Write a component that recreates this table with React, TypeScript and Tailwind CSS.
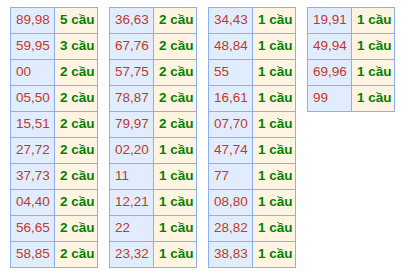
import React from "react";

const tables: [string, string][][] = [
  [
    ["89,98", "5 cầu"],
    ["59,95", "3 cầu"],
    ["00", "2 cầu"],
    ["05,50", "2 cầu"],
    ["15,51", "2 cầu"],
    ["27,72", "2 cầu"],
    ["37,73", "2 cầu"],
    ["04,40", "2 cầu"],
    ["56,65", "2 cầu"],
    ["58,85", "2 cầu"],
  ],
  [
    ["36,63", "2 cầu"],
    ["67,76", "2 cầu"],
    ["57,75", "2 cầu"],
    ["78,87", "2 cầu"],
    ["79,97", "2 cầu"],
    ["02,20", "1 cầu"],
    ["11", "1 cầu"],
    ["12,21", "1 cầu"],
    ["22", "1 cầu"],
    ["23,32", "1 cầu"],
  ],
  [
    ["34,43", "1 cầu"],
    ["48,84", "1 cầu"],
    ["55", "1 cầu"],
    ["16,61", "1 cầu"],
    ["07,70", "1 cầu"],
    ["47,74", "1 cầu"],
    ["77", "1 cầu"],
    ["08,80", "1 cầu"],
    ["28,82", "1 cầu"],
    ["38,83", "1 cầu"],
  ],
  [
    ["19,91", "1 cầu"],
    ["49,94", "1 cầu"],
    ["69,96", "1 cầu"],
    ["99", "1 cầu"],
  ],
];

export default function App() {
  return (
    <div
      className="w-[413px] h-[275px] bg-white flex items-start gap-[11px] pl-[10px] pt-[7px]"
      style={{ fontFamily: '"Liberation Sans", Arial, sans-serif' }}
    >
      {tables.map((rows, ti) => (
        <div key={ti} className="w-[88px] border-l border-t border-[#89b0f2] flex flex-col">
          {rows.map(([num, cnt], ri) => (
            <div key={ri} className="flex h-[26px]">
              <div className="w-[44px] border-r border-b border-[#89b0f2] bg-[#e1edff] flex items-center pl-[5px] text-[13.5px] text-[#c2391f]">
                {num}
              </div>
              <div className="w-[43px] border-r border-b border-[#89b0f2] bg-[#fff4e1] flex items-center pl-[5px] text-[13.5px] font-bold text-[#008000]">
                {cnt}
              </div>
            </div>
          ))}
        </div>
      ))}
    </div>
  );
}
